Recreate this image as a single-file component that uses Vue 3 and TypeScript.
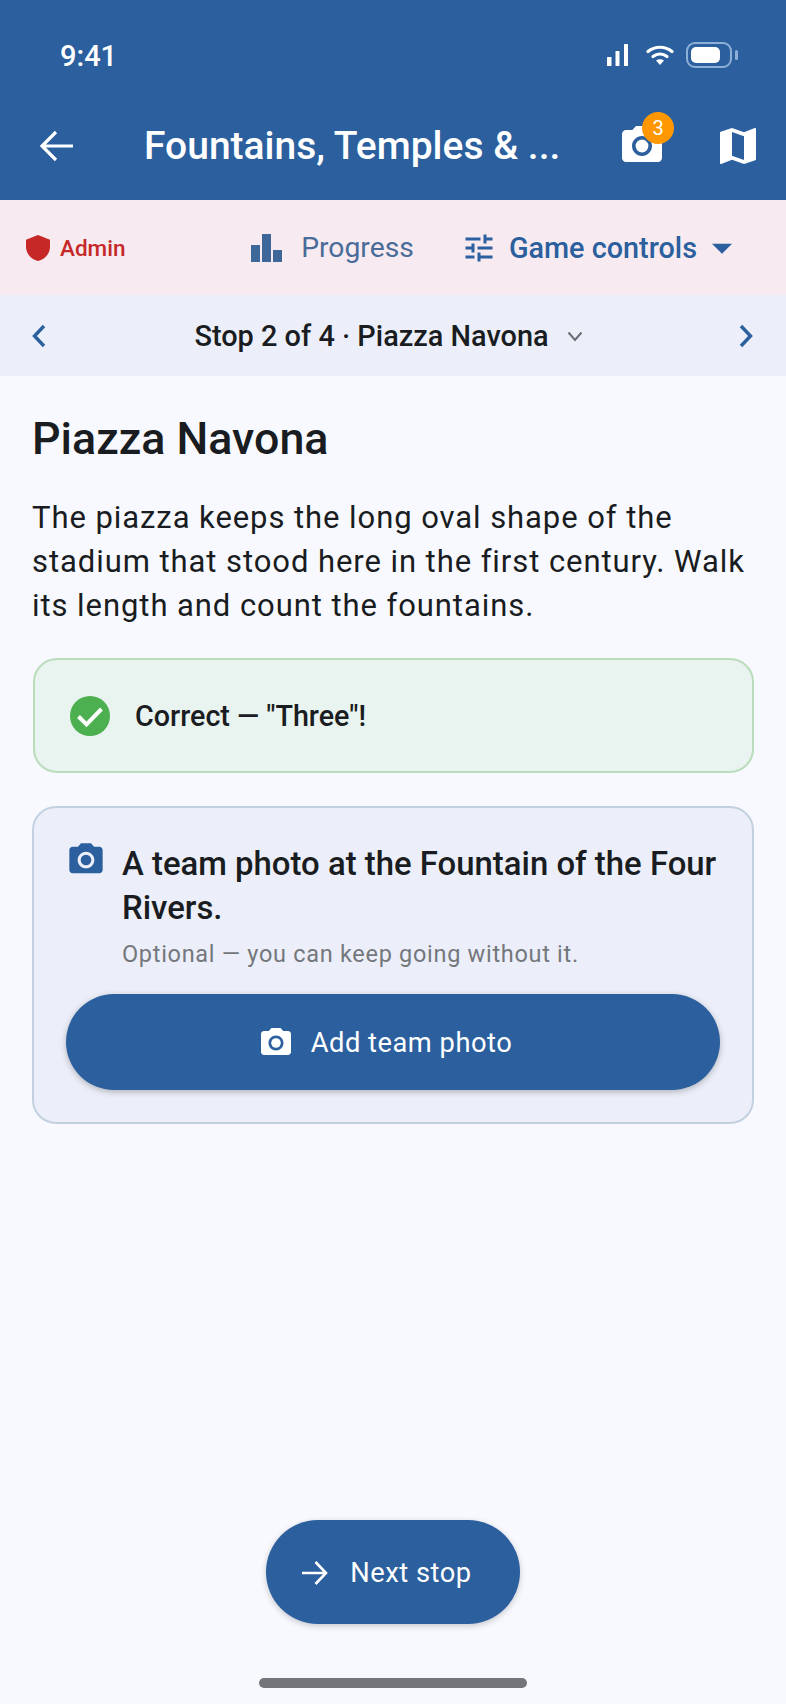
<script setup lang="ts">
const cameraPath =
  "M9 2 7.17 4H4c-1.1 0-2 .9-2 2v12c0 1.1.9 2 2 2h16c1.1 0 2-.9 2-2V6c0-1.1-.9-2-2-2h-3.17L15 2H9zm3 15c-2.76 0-5-2.24-5-5s2.24-5 5-5 5 2.24 5 5-2.24 5-5 5z";
</script>

<template>
  <div class="screen">
    <header class="top">
      <div class="status">
        <span class="time">9:41</span>
        <div class="status-icons">
          <svg class="signal" width="21" height="22" viewBox="0 0 21 22" fill="#fff">
            <rect x="0" y="13" width="4.500" height="9" rx="0.6" />
            <rect x="8.500" y="7" width="4" height="15" rx="0.6" />
            <rect x="17" y="0" width="4" height="22" rx="0.6" />
          </svg>
          <svg class="wifi" width="28" height="20" viewBox="0 0 28 20" fill="none" stroke="#fff" stroke-width="3.200" stroke-linecap="round">
            <path d="M2 6.500C9 .8 19 .8 26 6.500" />
            <path d="M7 11.500c4.200-3.200 9.800-3.200 14 0" />
            <path d="M14 20l-4-4.400c2.300-1.700 5.700-1.700 8 0z" fill="#fff" stroke="none" />
          </svg>
          <div class="battery">
            <div class="battery-body"><div class="battery-fill"></div></div>
            <div class="battery-cap"></div>
          </div>
        </div>
      </div>
      <div class="appbar">
        <svg class="back" width="36" height="36" viewBox="0 0 36 36" fill="none" stroke="#fff" stroke-width="3.200">
          <path d="M35 18H4M18 4 4 18l14 14" />
        </svg>
        <h1 class="app-title">Fountains, Temples &amp; ...</h1>
        <div class="camera-action">
          <svg width="48" height="48" viewBox="0 0 24 24" fill="#fff"><path :d="cameraPath" /><circle cx="12" cy="12" r="3.200" /></svg>
          <span class="badge">3</span>
        </div>
        <svg class="map" width="48" height="48" viewBox="0 0 24 24" fill="#fff">
          <path d="M20.500 3l-.16.03L15 5.100 9 3 3.360 4.900c-.21.07-.36.25-.36.48V20.500c0 .28.22.5.5.5l.16-.03L9 18.900l6 2.100 5.640-1.900c.21-.07.36-.25.36-.48V3.500c0-.28-.22-.5-.5-.5zM15 19l-6-2.110V5l6 2.110V19z" />
        </svg>
      </div>
    </header>

    <div class="admin-bar">
      <div class="admin">
        <svg width="24" height="26" viewBox="3 1 18 22" preserveAspectRatio="none" fill="#c62828"><path d="M12 1 3 5v6c0 5.550 3.840 10.740 9 12 5.160-1.260 9-6.450 9-12V5l-9-4z" /></svg>
        <span>Admin</span>
      </div>
      <div class="progress">
        <svg width="31" height="28" viewBox="0 0 31 28" fill="#3d6899">
          <rect x="0" y="11" width="9" height="17" />
          <rect x="11" y="0" width="9" height="28" />
          <rect x="22" y="16" width="9" height="12" />
        </svg>
        <span>Progress</span>
      </div>
      <div class="controls">
        <svg width="36" height="36" viewBox="0 0 24 24" fill="#2b5f9e"><path d="M3 17v2h6v-2H3zM3 5v2h10V5H3zm10 16v-2h8v-2h-8v-2h-2v6h2zM7 9v2H3v2h4v2h2V9H7zm14 4v-2H11v2h10zm-6-4h2V7h4V5h-4V3h-2v6z" /></svg>
        <span>Game controls</span>
        <svg class="caret" width="40" height="40" viewBox="0 0 24 24" fill="#2b5f9e"><path d="M6 9.500l6 6 6-6z" /></svg>
      </div>
    </div>

    <div class="stop-bar">
      <svg width="24" height="32" viewBox="0 0 24 32" fill="none" stroke="#2b5f9e" stroke-width="3.400"><path d="M17 6 7.500 16l9.500 10" /></svg>
      <div class="stop-label">
        <span>Stop 2 of 4 · Piazza Navona</span>
        <svg width="20" height="20" viewBox="0 0 20 20" fill="none" stroke="#6a6d72" stroke-width="2"><path d="M3.500 6.500 10 14l6.500-7.500" /></svg>
      </div>
      <svg width="24" height="32" viewBox="0 0 24 32" fill="none" stroke="#2b5f9e" stroke-width="3.400"><path d="M7 6l9.500 10L7 26" /></svg>
    </div>

    <main class="content">
      <h2 class="stop-title">Piazza Navona</h2>
      <p class="stop-text">The piazza keeps the long oval shape of the stadium that stood here in the first century. Walk its length and count the fountains.</p>

      <div class="correct-card">
        <svg width="40" height="40" viewBox="0 0 40 40">
          <circle cx="20" cy="20" r="20" fill="#4caf50" />
          <path d="M8.500 20.500l8 8L31.500 13" fill="none" stroke="#fff" stroke-width="4" />
        </svg>
        <span>Correct — "Three"!</span>
      </div>

      <section class="photo-card">
        <div class="photo-head">
          <svg class="photo-icon" width="40" height="40" viewBox="0 0 24 24" fill="#2b5f9e"><path :d="cameraPath" /><circle cx="12" cy="12" r="3.200" /></svg>
          <div class="photo-copy">
            <div class="photo-title">A team photo at the Fountain of the Four Rivers.</div>
            <div class="photo-note">Optional — you can keep going without it.</div>
          </div>
        </div>
        <button class="add-photo">
          <svg width="36" height="36" viewBox="0 0 24 24" fill="#fff"><path :d="cameraPath" /><circle cx="12" cy="12" r="3.200" /></svg>
          <span>Add team photo</span>
        </button>
      </section>
    </main>

    <div class="bottom">
      <button class="next">
        <svg width="28" height="28" viewBox="0 0 28 28" fill="none" stroke="#fff" stroke-width="2.600"><path d="M2 14h24M15.500 3 26 14 15.500 25" /></svg>
        <span>Next stop</span>
      </button>
      <div class="home-indicator"></div>
    </div>
  </div>
</template>

<style scoped>
.screen {
  width: 786px;
  height: 1704px;
  display: flex;
  flex-direction: column;
  background: #f8f9ff;
  font-family: Roboto, "Liberation Sans", sans-serif;
  color: #191c20;
  overflow: hidden;
}

.top {
  height: 200px;
  background: #2b5f9e;
  color: #fff;
}

.status {
  height: 100px;
  padding: 40px 48px 0 60px;
  box-sizing: border-box;
  display: flex;
  justify-content: space-between;
  align-items: flex-start;
}

.time {
  font-size: 29px;
  line-height: 32px;
  font-weight: 500;
}

.status-icons {
  display: flex;
  align-items: center;
  height: 32px;
  margin-top: -1px;
}

.wifi {
  margin-left: 18px;
}

.battery {
  display: flex;
  align-items: center;
  gap: 3px;
  margin-left: 12px;
}

.battery-body {
  width: 46px;
  height: 26px;
  box-sizing: border-box;
  padding: 3px;
  border: 2px solid #8fb0d6;
  border-radius: 9px;
}

.battery-fill {
  width: 29px;
  height: 16px;
  background: #fff;
  border-radius: 5px;
}

.battery-cap {
  width: 3px;
  height: 10px;
  border-radius: 2px;
  background: #8fb0d6;
}

.appbar {
  height: 92px;
  display: flex;
  align-items: center;
  padding-left: 38px;
}

.back {
  flex: none;
}

.app-title {
  margin: 0 0 0 70px;
  font-size: 39px;
  font-weight: 500;
  white-space: nowrap;
  width: 474px;
  flex: none;
}

.camera-action {
  position: relative;
  flex: none;
  width: 48px;
  height: 48px;
}

.badge {
  position: absolute;
  top: -10px;
  right: -8px;
  width: 32px;
  height: 32px;
  border-radius: 50%;
  background: #ff9800;
  font-size: 20px;
  line-height: 32px;
  text-align: center;
}

.map {
  flex: none;
  margin-left: 48px;
}

.admin-bar {
  height: 95px;
  background: #f7eaf0;
  display: flex;
  align-items: center;
  padding: 0 44px 0 26px;
  font-size: 28.300px;
}

.admin {
  display: flex;
  align-items: center;
  gap: 10px;
  color: #c62828;
  font-size: 22.500px;
  font-weight: 500;
}

.progress {
  display: flex;
  align-items: center;
  gap: 19px;
  margin-left: auto;
  color: #4a6c98;
}

.controls {
  display: flex;
  align-items: center;
  gap: 12px;
  margin-left: 47px;
  color: #2b5f9e;
  font-size: 28.800px;
  font-weight: 500;
}

.caret {
  margin-left: -7px;
}

.stop-bar {
  height: 81px;
  background: #eceff9;
  display: flex;
  align-items: center;
  justify-content: space-between;
  padding: 0 28px 0 27px;
}

.stop-label {
  display: flex;
  align-items: center;
  gap: 16px;
  margin-right: 6px;
  font-size: 28.900px;
  font-weight: 500;
}

.content {
  flex: 1;
  padding: 33px 32px 0;
}

.stop-title {
  margin: 0;
  font-size: 44.800px;
  line-height: 60px;
  font-weight: 500;
}

.stop-text {
  margin: 27px 0 0;
  font-size: 31px;
  line-height: 44px;
  letter-spacing: 0.93px;
}

.correct-card {
  margin: 30px 0 0 1px;
  height: 115px;
  box-sizing: border-box;
  display: flex;
  align-items: center;
  gap: 25px;
  padding: 0 35px;
  background: #e9f3f0;
  border: 2px solid #b9ddbb;
  border-radius: 24px;
  font-size: 28.700px;
  font-weight: 500;
}

.photo-card {
  margin-top: 33px;
  height: 318px;
  box-sizing: border-box;
  padding: 32px 32px 0;
  background: #eceff9;
  border: 2px solid #c3d0e0;
  border-radius: 24px;
}

.photo-head {
  display: flex;
  gap: 16px;
}

.photo-icon {
  flex: none;
}

.photo-copy {
  padding-top: 2px;
}

.photo-title {
  font-size: 32.900px;
  line-height: 44px;
  font-weight: 500;
}

.photo-note {
  margin-top: 8px;
  font-size: 23.500px;
  line-height: 32px;
  letter-spacing: 0.7px;
  color: #74777c;
}

.add-photo {
  margin-top: 24px;
  width: 100%;
  height: 96px;
  padding: 2px 16px 0 0;
  border: none;
  border-radius: 48px;
  background: #2b5f9e;
  color: #fff;
  font: inherit;
  font-size: 27.300px;
  letter-spacing: 0.5px;
  display: flex;
  align-items: center;
  justify-content: center;
  gap: 17px;
  box-shadow: 0 2px 6px rgba(0, 0, 0, 0.25);
}

.bottom {
  display: flex;
  flex-direction: column;
  align-items: center;
  padding-bottom: 16px;
}

.next {
  width: 254px;
  height: 104px;
  padding: 2px 14px 0 0;
  border: none;
  border-radius: 52px;
  background: #2b5f9e;
  color: #fff;
  font: inherit;
  font-size: 27.300px;
  letter-spacing: 0.5px;
  display: flex;
  align-items: center;
  justify-content: center;
  gap: 22px;
  box-shadow: 0 2px 6px rgba(0, 0, 0, 0.2);
}

.home-indicator {
  margin-top: 54px;
  width: 268px;
  height: 10px;
  border-radius: 5px;
  background: #747578;
}
</style>
